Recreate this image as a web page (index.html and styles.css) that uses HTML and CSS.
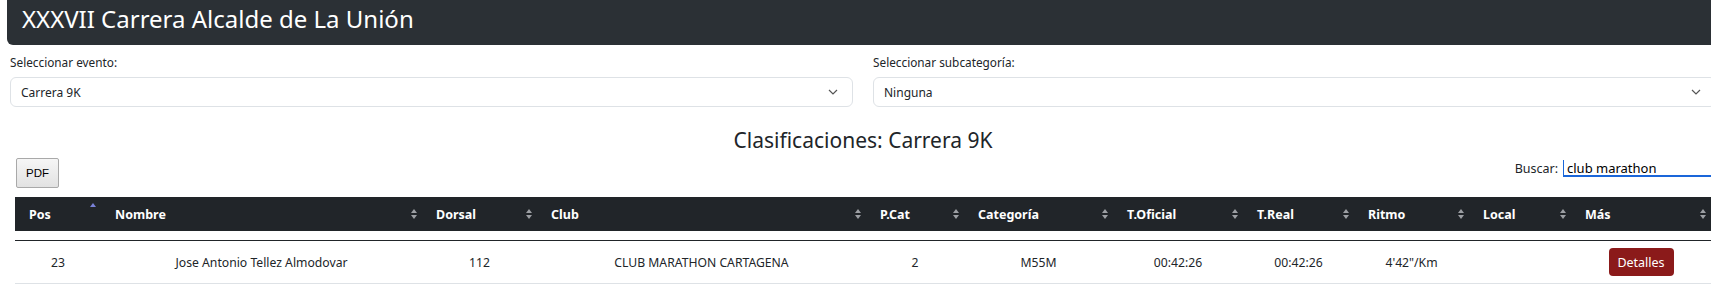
FILE: index.html
```html
<!DOCTYPE html>
<html lang="es">

<head>
    <meta charset="UTF-8">
    <meta name="viewport" content="width=device-width, initial-scale=1.0">
    <title>Clasificaciones</title>
    <link rel="stylesheet" href="styles.css">
</head>

<body>
    <div class="page">
        <header class="topbar">
            <h1>XXXVII Carrera Alcalde de La Unión</h1>
        </header>

        <div class="filters">
            <div class="field">
                <label>Seleccionar evento:</label>
                <div class="select">
                    <span>Carrera 9K</span>
                    <svg width="10" height="6" viewBox="0 0 10 6"><path d="M1 1l4 4 4-4" fill="none" stroke="#555" stroke-width="1.2"/></svg>
                </div>
            </div>
            <div class="field">
                <label>Seleccionar subcategoría:</label>
                <div class="select">
                    <span>Ninguna</span>
                    <svg width="10" height="6" viewBox="0 0 10 6"><path d="M1 1l4 4 4-4" fill="none" stroke="#555" stroke-width="1.2"/></svg>
                </div>
            </div>
        </div>

        <h2 class="results-title">Clasificaciones: Carrera 9K</h2>

        <div class="toolbar">
            <button class="btn-pdf">PDF</button>
            <label class="search">Buscar: <input type="search" value="club marathon"></label>
        </div>

        <div class="results">
            <table class="head-table">
                <colgroup>
                    <col style="width:86px"><col style="width:321px"><col style="width:115px"><col style="width:329px">
                    <col style="width:98px"><col style="width:149px"><col style="width:130px"><col style="width:111px">
                    <col style="width:115px"><col style="width:102px"><col style="width:140px">
                </colgroup>
                <thead>
                    <tr>
                        <th><div class="sort">Pos<svg class="arrows active" width="6" height="10" viewBox="0 0 6 10"><path d="M0 4L3 0L6 4Z"/></svg></div></th>
                        <th><div class="sort">Nombre<svg class="arrows" width="6" height="10" viewBox="0 0 6 10"><path d="M0 4L3 0L6 4Z"/><path d="M0 6L3 10L6 6Z"/></svg></div></th>
                        <th><div class="sort">Dorsal<svg class="arrows" width="6" height="10" viewBox="0 0 6 10"><path d="M0 4L3 0L6 4Z"/><path d="M0 6L3 10L6 6Z"/></svg></div></th>
                        <th><div class="sort">Club<svg class="arrows" width="6" height="10" viewBox="0 0 6 10"><path d="M0 4L3 0L6 4Z"/><path d="M0 6L3 10L6 6Z"/></svg></div></th>
                        <th><div class="sort">P.Cat<svg class="arrows" width="6" height="10" viewBox="0 0 6 10"><path d="M0 4L3 0L6 4Z"/><path d="M0 6L3 10L6 6Z"/></svg></div></th>
                        <th><div class="sort">Categoría<svg class="arrows" width="6" height="10" viewBox="0 0 6 10"><path d="M0 4L3 0L6 4Z"/><path d="M0 6L3 10L6 6Z"/></svg></div></th>
                        <th><div class="sort">T.Oficial<svg class="arrows" width="6" height="10" viewBox="0 0 6 10"><path d="M0 4L3 0L6 4Z"/><path d="M0 6L3 10L6 6Z"/></svg></div></th>
                        <th><div class="sort">T.Real<svg class="arrows" width="6" height="10" viewBox="0 0 6 10"><path d="M0 4L3 0L6 4Z"/><path d="M0 6L3 10L6 6Z"/></svg></div></th>
                        <th><div class="sort">Ritmo<svg class="arrows" width="6" height="10" viewBox="0 0 6 10"><path d="M0 4L3 0L6 4Z"/><path d="M0 6L3 10L6 6Z"/></svg></div></th>
                        <th><div class="sort">Local<svg class="arrows" width="6" height="10" viewBox="0 0 6 10"><path d="M0 4L3 0L6 4Z"/><path d="M0 6L3 10L6 6Z"/></svg></div></th>
                        <th><div class="sort">Más<svg class="arrows" width="6" height="10" viewBox="0 0 6 10"><path d="M0 4L3 0L6 4Z"/><path d="M0 6L3 10L6 6Z"/></svg></div></th>
                    </tr>
                </thead>
            </table>

            <table class="body-table">
                <colgroup>
                    <col style="width:86px"><col style="width:321px"><col style="width:115px"><col style="width:329px">
                    <col style="width:98px"><col style="width:149px"><col style="width:130px"><col style="width:111px">
                    <col style="width:115px"><col style="width:102px"><col style="width:140px">
                </colgroup>
                <tbody>
                    <tr>
                        <td>23</td>
                        <td>Jose Antonio Tellez Almodovar</td>
                        <td>112</td>
                        <td>CLUB MARATHON CARTAGENA</td>
                        <td>2</td>
                        <td>M55M</td>
                        <td>00:42:26</td>
                        <td>00:42:26</td>
                        <td>4'42"/Km</td>
                        <td></td>
                        <td><button class="btn-details">Detalles</button></td>
                    </tr>
                </tbody>
            </table>
        </div>
    </div>
</body>

</html>
```

FILE: styles.css
```css
body {
    margin: 0;
    font-family: "Noto Sans", "Open Sans", sans-serif;
    color: #212529;
    background: #fff;
    overflow: hidden;
}

.page {
    width: 1716px;
}

.topbar {
    margin-left: 7px;
    height: 45px;
    background-color: #2b3035;
    border-radius: 0 0 0 6px;
    padding-left: 15px;
}

.topbar h1 {
    margin: 0;
    font-size: 24px;
    font-weight: 400;
    line-height: 37px;
    color: #fff;
}

.filters {
    display: grid;
    grid-template-columns: 843px 843px;
    column-gap: 20px;
    padding-left: 10px;
    margin-top: 8px;
}

.field label {
    display: block;
    font-size: 11.8px;
    line-height: 18px;
    margin-bottom: 6px;
}

.select {
    display: flex;
    justify-content: space-between;
    align-items: center;
    height: 28px;
    padding: 0 14px 0 10px;
    border: 1px solid #dee2e6;
    border-radius: 6px;
    font-size: 12px;
}

.results-title {
    margin: 19px 0 0 10px;
    font-size: 21px;
    font-weight: 400;
    line-height: 28px;
    text-align: center;
}

.toolbar {
    display: flex;
    justify-content: space-between;
    align-items: flex-start;
    width: 1695px;
    margin: 4px 0 0 16px;
}

.btn-pdf {
    width: 43px;
    height: 30px;
    padding: 0;
    border: 1px solid #a9a9a9;
    border-radius: 2px;
    background: linear-gradient(#f6f6f6, #e2e2e2);
    font-family: "Liberation Sans", Arial, sans-serif;
    font-size: 11.5px;
    color: #000;
}

.search {
    display: flex;
    align-items: center;
    gap: 5px;
    margin-top: 2px;
    font-size: 12.5px;
}

.search input {
    width: 148px;
    height: 17px;
    padding: 0 0 0 3px;
    border: none;
    border-left: 1px solid #1a66d9;
    border-bottom: 2px solid #1a66d9;
    outline: none;
    font-family: "Noto Sans", sans-serif;
    font-size: 13px;
    color: #000;
}

.results {
    margin: 9px 0 0 15px;
}

table {
    width: 1696px;
    table-layout: fixed;
    border-collapse: collapse;
}

.head-table th {
    height: 34px;
    padding: 0 5px 0 14px;
    background-color: #212529;
    color: #fff;
    font-size: 12.5px;
    font-weight: 700;
    text-align: left;
}

.sort {
    display: flex;
    justify-content: space-between;
    align-items: center;
}

.arrows {
    fill: #9c9fa3;
}

.arrows.active {
    fill: #7a82d8;
    align-self: flex-start;
    margin-top: -3px;
}

.body-table {
    margin-top: 9px;
    border-top: 1px solid #212529;
}

.body-table td {
    height: 42px;
    padding: 0 8px;
    border-bottom: 1px solid #dee2e6;
    font-size: 12.2px;
    text-align: center;
}

.btn-details {
    width: 65px;
    height: 28px;
    border: none;
    border-radius: 4px;
    background-color: #8b1a1a;
    color: #fff;
    font-family: "Noto Sans", sans-serif;
    font-size: 12.5px;
}
```
